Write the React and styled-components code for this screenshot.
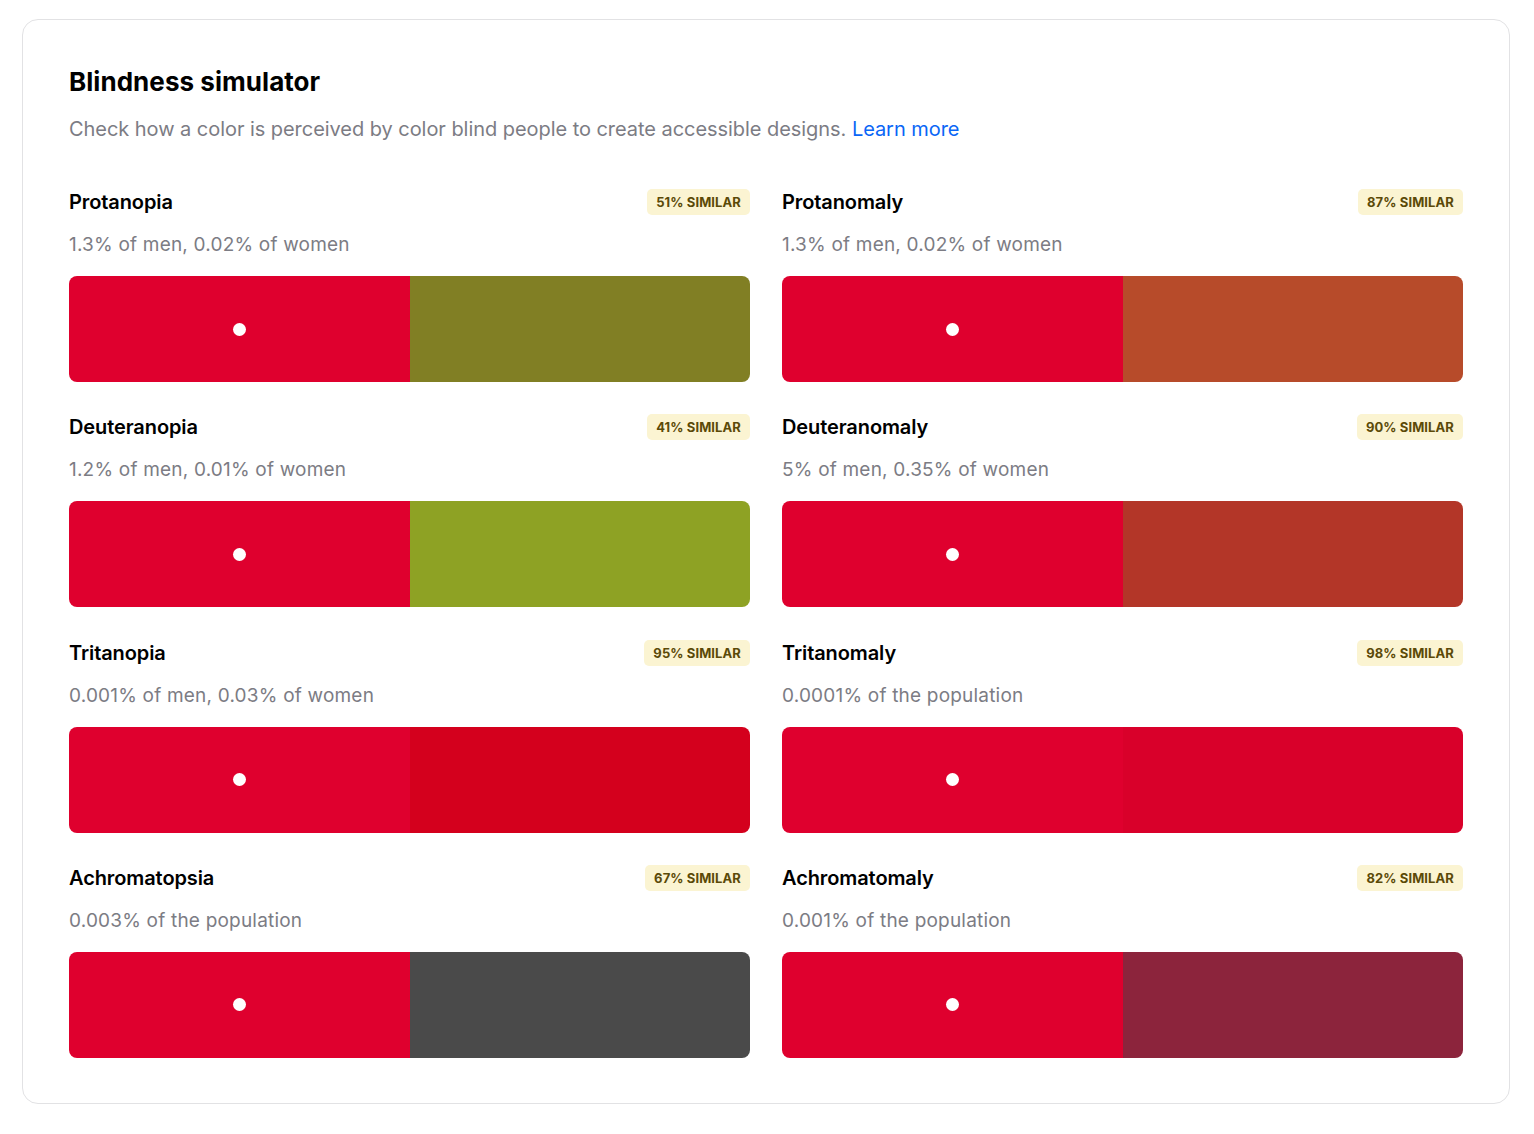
import React from "react";
import styled, { createGlobalStyle } from "styled-components";

const Global = createGlobalStyle`
  html, body { margin: 0; padding: 0; background: #ffffff; }
  body { font-family: Inter, "Noto Sans", sans-serif; -webkit-font-smoothing: antialiased; }
`;

const Page = styled.div`
  padding: 19px 24px 29px 22px;
`;

const Card = styled.section`
  border: 1px solid #e2e2e4;
  border-radius: 16px;
  padding: 47px 46px 45px 46px;
  background: #fff;
`;

const Title = styled.h1`
  margin: 0;
  font-size: 26px;
  line-height: 30px;
  font-weight: 700;
  letter-spacing: 0.05px;
  color: #000;
`;

const Lead = styled.p`
  margin: 18px 0 0;
  font-size: 20px;
  line-height: 28px;
  letter-spacing: -0.05px;
  color: #7c7c84;
`;

const Link = styled.a`
  color: #0a66f6;
  text-decoration: none;
`;

const Grid = styled.div`
  margin-top: 46px;
  display: grid;
  grid-template-columns: 1fr 1fr;
  column-gap: 32px;
  row-gap: 32.33px;
`;

const Item = styled.div`
  display: flex;
  flex-direction: column;
`;

const Head = styled.div`
  display: flex;
  align-items: center;
  justify-content: space-between;
  height: 26px;
`;

const Name = styled.h2`
  margin: 0;
  font-size: 20px;
  font-weight: 600;
  letter-spacing: -0.1px;
  color: #000;
`;

const Badge = styled.span`
  display: inline-flex;
  align-items: center;
  height: 26px;
  padding: 0 9px;
  border-radius: 5px;
  background: #fbf4d2;
  color: #5b4a08;
  font-size: 13px;
  font-weight: 700;
  letter-spacing: 0.1px;
  text-transform: uppercase;
`;

const Stat = styled.p`
  margin: 16px 0 0;
  font-size: 19px;
  line-height: 28px;
  letter-spacing: 0.2px;
  color: #7c7c84;
`;

const Swatch = styled.div`
  margin-top: 17px;
  height: 106px;
  border-radius: 8px;
  overflow: hidden;
  display: grid;
  grid-template-columns: 1fr 1fr;
`;

const Half = styled.div`
  background: ${(p) => p.$color};
  display: flex;
  align-items: center;
  justify-content: center;
`;

const Dot = styled.span`
  width: 13px;
  height: 13px;
  border-radius: 50%;
  background: #fff;
`;

const ORIGINAL = "#df002e";

const items = [
  { name: "Protanopia", sim: 51, stat: "1.3% of men, 0.02% of women", color: "#817f24" },
  { name: "Protanomaly", sim: 87, stat: "1.3% of men, 0.02% of women", color: "#b74b2a" },
  { name: "Deuteranopia", sim: 41, stat: "1.2% of men, 0.01% of women", color: "#8ea224" },
  { name: "Deuteranomaly", sim: 90, stat: "5% of men, 0.35% of women", color: "#b33628" },
  { name: "Tritanopia", sim: 95, stat: "0.001% of men, 0.03% of women", color: "#d4001d" },
  { name: "Tritanomaly", sim: 98, stat: "0.0001% of the population", color: "#d9002a" },
  { name: "Achromatopsia", sim: 67, stat: "0.003% of the population", color: "#4a4a4a" },
  { name: "Achromatomaly", sim: 82, stat: "0.001% of the population", color: "#8c243c" },
];

export default function App() {
  return (
    <Page>
      <Global />
      <Card>
        <Title>Blindness simulator</Title>
        <Lead>
          Check how a color is perceived by color blind people to create accessible designs.{" "}
          <Link href="#">Learn more</Link>
        </Lead>
        <Grid>
          {items.map((it) => (
            <Item key={it.name}>
              <Head>
                <Name>{it.name}</Name>
                <Badge>{it.sim}% similar</Badge>
              </Head>
              <Stat>{it.stat}</Stat>
              <Swatch>
                <Half $color={ORIGINAL}>
                  <Dot />
                </Half>
                <Half $color={it.color} />
              </Swatch>
            </Item>
          ))}
        </Grid>
      </Card>
    </Page>
  );
}
